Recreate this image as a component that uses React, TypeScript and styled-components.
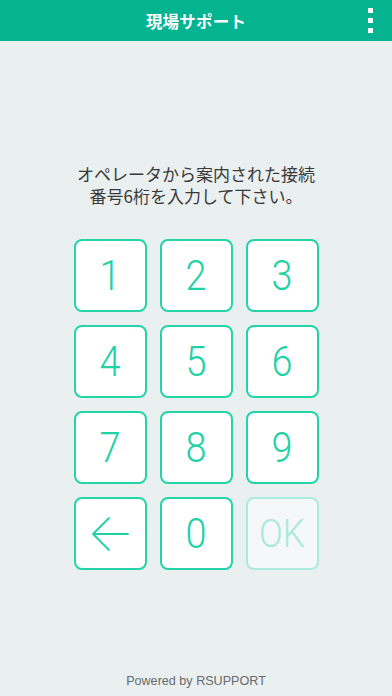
import React from "react";
import styled, { createGlobalStyle } from "styled-components";

const Global = createGlobalStyle`
  html, body { margin: 0; padding: 0; }
  body { background: #eaeff0; font-family: "Noto Sans CJK JP", "Noto Sans", sans-serif; }
`;

const Page = styled.div`
  display: flex;
  flex-direction: column;
  min-height: 696px;
  background: #eaeff0;
`;

const Header = styled.header`
  position: relative;
  height: 41px;
  background: #04b390;
  display: flex;
  align-items: center;
  justify-content: center;
`;

const Title = styled.h1`
  margin: 0;
  color: #ffffff;
  font-size: 16.5px;
  font-weight: 700;
  font-family: "Noto Sans CJK JP", sans-serif;
  letter-spacing: 0.2px;
`;

const Menu = styled.button`
  position: absolute;
  right: 19px;
  top: 8px;
  width: 5px;
  padding: 0;
  border: none;
  background: transparent;
  display: flex;
  flex-direction: column;
  gap: 5px;
`;

const Dot = styled.span`
  display: block;
  width: 5px;
  height: 5px;
  background: #ffffff;
`;

const Instruction = styled.p`
  margin: 122px 0 0;
  text-align: center;
  color: #3a3a3a;
  font-size: 17px;
  line-height: 22px;
  font-family: "Noto Sans CJK JP", sans-serif;
  font-weight: 400;
`;

const Keypad = styled.div`
  margin: 32px auto 0;
  display: grid;
  grid-template-columns: repeat(3, 73px);
  grid-auto-rows: 73px;
  gap: 13px;
`;

const Key = styled.button<{ $disabled?: boolean }>`
  box-sizing: border-box;
  border: 2px solid ${(p) => (p.$disabled ? "#a9ecdb" : "#22d4a8")};
  border-radius: 8px;
  background: ${(p) => (p.$disabled ? "#f5f7f8" : "#ffffff")};
  color: ${(p) => (p.$disabled ? "#a6ebd9" : "#1fd2a5")};
  font-family: "Roboto", sans-serif;
  font-weight: 300;
  font-size: 43px;
  line-height: 1;
  padding: 0;
  display: flex;
  align-items: center;
  justify-content: center;
`;

const Glyph = styled.span`
  display: inline-block;
  transform: scaleX(0.88);
`;

const OkLabel = styled.span`
  display: inline-block;
  font-size: 38px;
  transform: scaleX(0.92);
`;

const Spacer = styled.div`
  flex: 1;
`;

const Footer = styled.footer`
  text-align: center;
  color: #666b6b;
  font-family: "Liberation Sans", Arial, sans-serif;
  font-size: 12.6px;
  line-height: 16px;
  padding-bottom: 7px;
`;

const BackArrow = () => (
  <svg width="40" height="40" viewBox="0 0 40 40" fill="none">
    <path d="M38 20 H4 M19 4 L3 20 L19 36" stroke="#1fd2a5" strokeWidth="1.8" strokeLinecap="round" strokeLinejoin="round" />
  </svg>
);

export default function App() {
  const digits = ["1", "2", "3", "4", "5", "6", "7", "8", "9"];
  return (
    <>
      <Global />
      <Page>
        <Header>
          <Title>現場サポート</Title>
          <Menu aria-label="menu">
            <Dot />
            <Dot />
            <Dot />
          </Menu>
        </Header>
        <Instruction>
          オペレータから案内された接続
          <br />
          番号6桁を入力して下さい。
        </Instruction>
        <Keypad>
          {digits.map((d) => (
            <Key key={d}>
              <Glyph>{d}</Glyph>
            </Key>
          ))}
          <Key aria-label="back">
            <BackArrow />
          </Key>
          <Key>
            <Glyph>0</Glyph>
          </Key>
          <Key $disabled>
            <OkLabel>OK</OkLabel>
          </Key>
        </Keypad>
        <Spacer />
        <Footer>Powered by RSUPPORT</Footer>
      </Page>
    </>
  );
}
